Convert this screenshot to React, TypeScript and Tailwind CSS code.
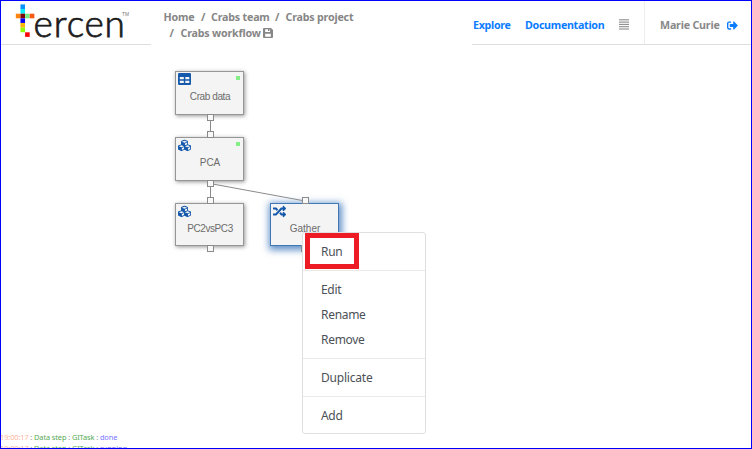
import React from "react";
import { FaCubes, FaRandom, FaSignOutAlt } from "react-icons/fa";

const pixels: [number, number, string][] = [
  [1, 0, "#0a94fb"],
  [1, 1, "#08eefa"],
  [0, 2, "#fb850f"],
  [1, 2, "#790808"],
  [2, 2, "#78ef86"],
  [3, 2, "#fa5710"],
  [1, 3, "#0505f5"],
  [1, 4, "#fbb608"],
  [1, 5, "#96f908"],
  [2, 6, "#fb0808"],
];

function Logo() {
  return (
    <svg width="150" height="43" viewBox="1 1 150 43" className="shrink-0">
      {pixels.map(([c, r, fill]) => (
        <rect key={`${c}-${r}`} x={15.8 + c * 4.65} y={4.4 + r * 4.65} width="4.6" height="4.6" fill={fill} />
      ))}
      <text x="33.4 53.8 66.7 84.4 104.4" y="36.6" fill="#1c1c1c" stroke="#1c1c1c" strokeWidth="0.75" fontSize="37" fontWeight="300" fontFamily="Lato, sans-serif">
        ercen
      </text>
      <text x="122" y="16" textLength="7" lengthAdjust="spacingAndGlyphs" fill="#777" fontSize="5" fontFamily="Liberation Sans, sans-serif">
        TM
      </text>
    </svg>
  );
}

function SaveIcon() {
  return (
    <svg width="10" height="10" viewBox="0 0 10 10" fillRule="evenodd" fill="#868686">
      <path d="M1 0h7l2 2v7a1 1 0 0 1-1 1H1a1 1 0 0 1-1-1V1a1 1 0 0 1 1-1ZM2.2 1.3v2.6h4.9V1.3H6.5v1.8H5V1.3ZM2.2 5.8v2.9h5.6V5.8Z" />
    </svg>
  );
}

function TableIcon() {
  return (
    <svg width="13" height="12" viewBox="0 0 13 12">
      <rect width="13" height="12" rx="1.2" fill="#1459ac" />
      <path d="M1.8 4h4v2.3h-4zM7.3 4h4v2.3h-4zM1.8 7.8h4v2.3h-4zM7.3 7.8h4v2.3h-4z" fill="#f4f4f4" />
    </svg>
  );
}

type NodeProps = {
  label: string;
  x: number;
  y: number;
  height: number;
  icon: React.ReactNode;
  done?: boolean;
  selected?: boolean;
};

function StepNode({ label, x, y, height, icon, done, selected }: NodeProps) {
  return (
    <div
      className={`absolute flex w-[69px] items-center justify-center border bg-[#f4f4f4] pl-px pt-[7px] font-['Liberation_Sans',sans-serif] text-[10px] text-[#6c6c6c] ${
        selected ? "border-[#3f78b5] shadow-[1px_2px_7px_2px_#1a60b0b0]" : "border-[#969696] shadow-[1px_1px_4px_#0000006b]"
      }`}
      style={{ left: x, top: y, height }}
    >
      <span className="absolute left-[2px] top-[1px] text-[13px] text-[#1459ac]">{icon}</span>
      {done && <span className="absolute right-[3px] top-[4px] size-[4px] bg-[#86ee86]" />}
      <span className={label.length > 7 ? "tracking-[-0.4px]" : ""}>{label}</span>
    </div>
  );
}

const ports = [
  [210, 117], [210, 134], [210, 183], [210, 200], [210, 248], [305, 200], [304, 248],
];

const groups = [["Run"], ["Edit", "Rename", "Remove"], ["Duplicate"], ["Add"]];

export default function App() {
  return (
    <div className="relative flex h-[449px] w-[752px] flex-col overflow-hidden border border-[#0000ff] bg-white font-['Noto_Sans',sans-serif]">
      <header className="flex h-[44px] shrink-0">
        <div className="w-[150px] border-b border-[#dedede]">
          <Logo />
        </div>
        <nav className="w-[321px] pl-[12.5px] pt-[8px] text-[10.7px] font-bold leading-[16px] tracking-[-0.2px] text-[#868686]">
          <div className="flex whitespace-nowrap">
            <span className="w-[37.5px]">Home</span>
            <span className="w-[10px]">/</span>
            <span className="w-[64px]">Crabs team</span>
            <span className="w-[10.5px]">/</span>
            <span>Crabs project</span>
          </div>
          <div className="flex items-center pl-[6px]">
            <span className="w-[11px]">/</span>
            <span className="w-[82.5px] whitespace-nowrap">Crabs workflow</span>
            <SaveIcon />
          </div>
        </nav>
        <div className="flex flex-1 items-center whitespace-nowrap border-b border-[#dedede] pl-px pt-[5px] text-[10.7px] font-bold tracking-[-0.3px] text-[#0b7cff]">
          <span className="w-[52px]">Explore</span>
          <span className="w-[94px]">Documentation</span>
          <svg width="10" height="11" viewBox="0 0 10 11" className="-mt-[2px] mr-[15px]">
            {[0.8, 3.1, 5.4, 7.7, 10].map((y) => (
              <path key={y} d={`M0 ${y}h10`} stroke="#8c8c8c" strokeWidth="1.1" />
            ))}
          </svg>
          <div className="-mt-[5px] flex h-[43px] flex-1 items-center border-l border-[#eeeeee] pl-[15px] pt-[5px]">
            <span className="w-[67px] tracking-[-0.2px] text-[#888]">Marie Curie</span>
            <FaSignOutAlt className="size-[11px]" />
          </div>
        </div>
      </header>

      <main className="flex-1">
        <StepNode label="Crab data" x={174} y={70} height={44} icon={<TableIcon />} done />
        <StepNode label="PCA" x={174} y={136} height={44} icon={<FaCubes />} done />
        <StepNode label="PC2vsPC3" x={174} y={202} height={43} icon={<FaCubes />} />
        <StepNode label="Gather" x={269} y={202} height={43} icon={<FaRandom />} selected />

        <svg className="absolute left-0 top-0" width="750" height="447" viewBox="1 1 750 447" fill="none" stroke="#8b8b8b">
          <path d="M210.5 118V134M210.5 184V200M210 183.5L305 201" />
          {ports.map(([x, y]) => (
            <rect key={`${x}-${y}`} x={x - 2.5} y={y - 2.5} width="6" height="6" fill="#f8f8f8" />
          ))}
        </svg>

        <div className="absolute left-[301px] top-[231px] h-[202px] w-[124px] rounded-[3px] border border-[#dfdfdf] bg-white py-[6px] text-[12px] leading-[25px] tracking-[-0.3px] text-[#4c5157]">
          {groups.map((items, i) => (
            <div key={items[0]} className={i ? "mt-[6px] border-t border-[#e9e9e9] pt-[6px]" : ""}>
              {items.map((item) => (
                <div key={item} className={item.length > 6 ? "pl-[18px] tracking-[-0.2px]" : "pl-[18px]"}>{item}</div>
              ))}
            </div>
          ))}
        </div>
        <div className="absolute left-[304px] top-[232px] h-[36px] w-[54px] border-[5px] border-[#ed1c24]" />
      </main>

      <footer className="-ml-px h-[16px] overflow-hidden whitespace-nowrap text-[7.4px] leading-[11px] tracking-[-0.1px] text-[#999]">
        {["done", "running"].map((state) => (
          <div key={state}>
            <span className="text-[#ffb49b]">19:00:17</span> : <span className="text-[#55aa55]">Data step</span> :{" "}
            <span className="text-[#55aa55]">GITask</span> : <span className="text-[#7777ff]">{state}</span>
          </div>
        ))}
      </footer>
    </div>
  );
}
